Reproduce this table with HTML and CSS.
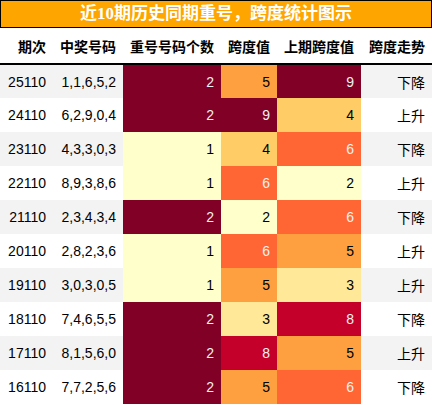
FILE: index.html
```html
<!DOCTYPE html>
<html lang="zh">
<head>
  <meta charset="UTF-8">
  <meta name="viewport" content="width=device-width, initial-scale=1.0">
  <title>跨度统计图示</title>
  <link rel="stylesheet" href="styles.css">
</head>
<body>
  <div class="caption">近10期历史同期重号，跨度统计图示</div>
  <table class="stats">
    <colgroup>
      <col class="c-period">
      <col class="c-nums">
      <col class="c-repeat">
      <col class="c-span">
      <col class="c-prev">
      <col class="c-trend">
    </colgroup>
    <thead>
      <tr>
        <th>期次</th>
        <th>中奖号码</th>
        <th>重号号码个数</th>
        <th>跨度值</th>
        <th>上期跨度值</th>
        <th>跨度走势</th>
      </tr>
    </thead>
    <tbody>
      <tr><td>25110</td><td>1,1,6,5,2</td><td class="h9">2</td><td class="h5">5</td><td class="h9">9</td><td>下降</td></tr>
      <tr><td>24110</td><td>6,2,9,0,4</td><td class="h9">2</td><td class="h9">9</td><td class="h4">4</td><td>上升</td></tr>
      <tr><td>23110</td><td>4,3,3,0,3</td><td class="h1">1</td><td class="h4">4</td><td class="h6">6</td><td>下降</td></tr>
      <tr><td>22110</td><td>8,9,3,8,6</td><td class="h1">1</td><td class="h6">6</td><td class="h1">2</td><td>上升</td></tr>
      <tr><td>21110</td><td>2,3,4,3,4</td><td class="h9">2</td><td class="h1">2</td><td class="h6">6</td><td>下降</td></tr>
      <tr><td>20110</td><td>2,8,2,3,6</td><td class="h1">1</td><td class="h6">6</td><td class="h5">5</td><td>上升</td></tr>
      <tr><td>19110</td><td>3,0,3,0,5</td><td class="h1">1</td><td class="h5">5</td><td class="h3">3</td><td>上升</td></tr>
      <tr><td>18110</td><td>7,4,6,5,5</td><td class="h9">2</td><td class="h3">3</td><td class="h8">8</td><td>下降</td></tr>
      <tr><td>17110</td><td>8,1,5,6,0</td><td class="h9">2</td><td class="h8">8</td><td class="h5">5</td><td>上升</td></tr>
      <tr><td>16110</td><td>7,7,2,5,6</td><td class="h9">2</td><td class="h5">5</td><td class="h6">6</td><td>下降</td></tr>
    </tbody>
  </table>
</body>
</html>
```

FILE: styles.css
```css
* {
  box-sizing: border-box;
}

body {
  margin: 0;
  background: #fff;
  font-family: "Liberation Sans", "Noto Sans CJK SC", sans-serif;
}

.caption {
  width: 432px;
  height: 28px;
  background: #ffa500;
  border: 1px solid #000;
  color: #fff;
  font-family: "Liberation Serif", "Noto Sans CJK SC", serif;
  font-weight: bold;
  font-size: 17px;
  line-height: 25px;
  text-align: center;
}

.stats {
  width: 432px;
  border-collapse: collapse;
  table-layout: fixed;
  font-size: 14px;
}

.c-period { width: 53px; }
.c-nums { width: 70px; }
.c-repeat { width: 98px; }
.c-span { width: 56px; }
.c-prev { width: 84px; }
.c-trend { width: 71px; }

.stats th {
  height: 36px;
  padding: 0 7px 0 0;
  text-align: right;
  font-family: "Noto Sans CJK SC", sans-serif;
  font-weight: bold;
  font-size: 14px;
  color: #000;
  border-bottom: 2px solid #000;
}

.stats td {
  height: 34px;
  padding: 0 7px 0 0;
  text-align: right;
  color: #000;
  white-space: nowrap;
}

.stats tbody tr:nth-child(odd) {
  background: #f3f3f3;
}

.stats td.h1 { background: #ffffcc; color: #000; }
.stats td.h3 { background: #ffe999; color: #000; }
.stats td.h4 { background: #ffcc66; color: #000; }
.stats td.h5 { background: #ffa040; color: #000; }
.stats td.h6 { background: #ff6633; color: #f1f1f1; }
.stats td.h8 { background: #c4002a; color: #f1f1f1; }
.stats td.h9 { background: #800026; color: #f1f1f1; }
```
